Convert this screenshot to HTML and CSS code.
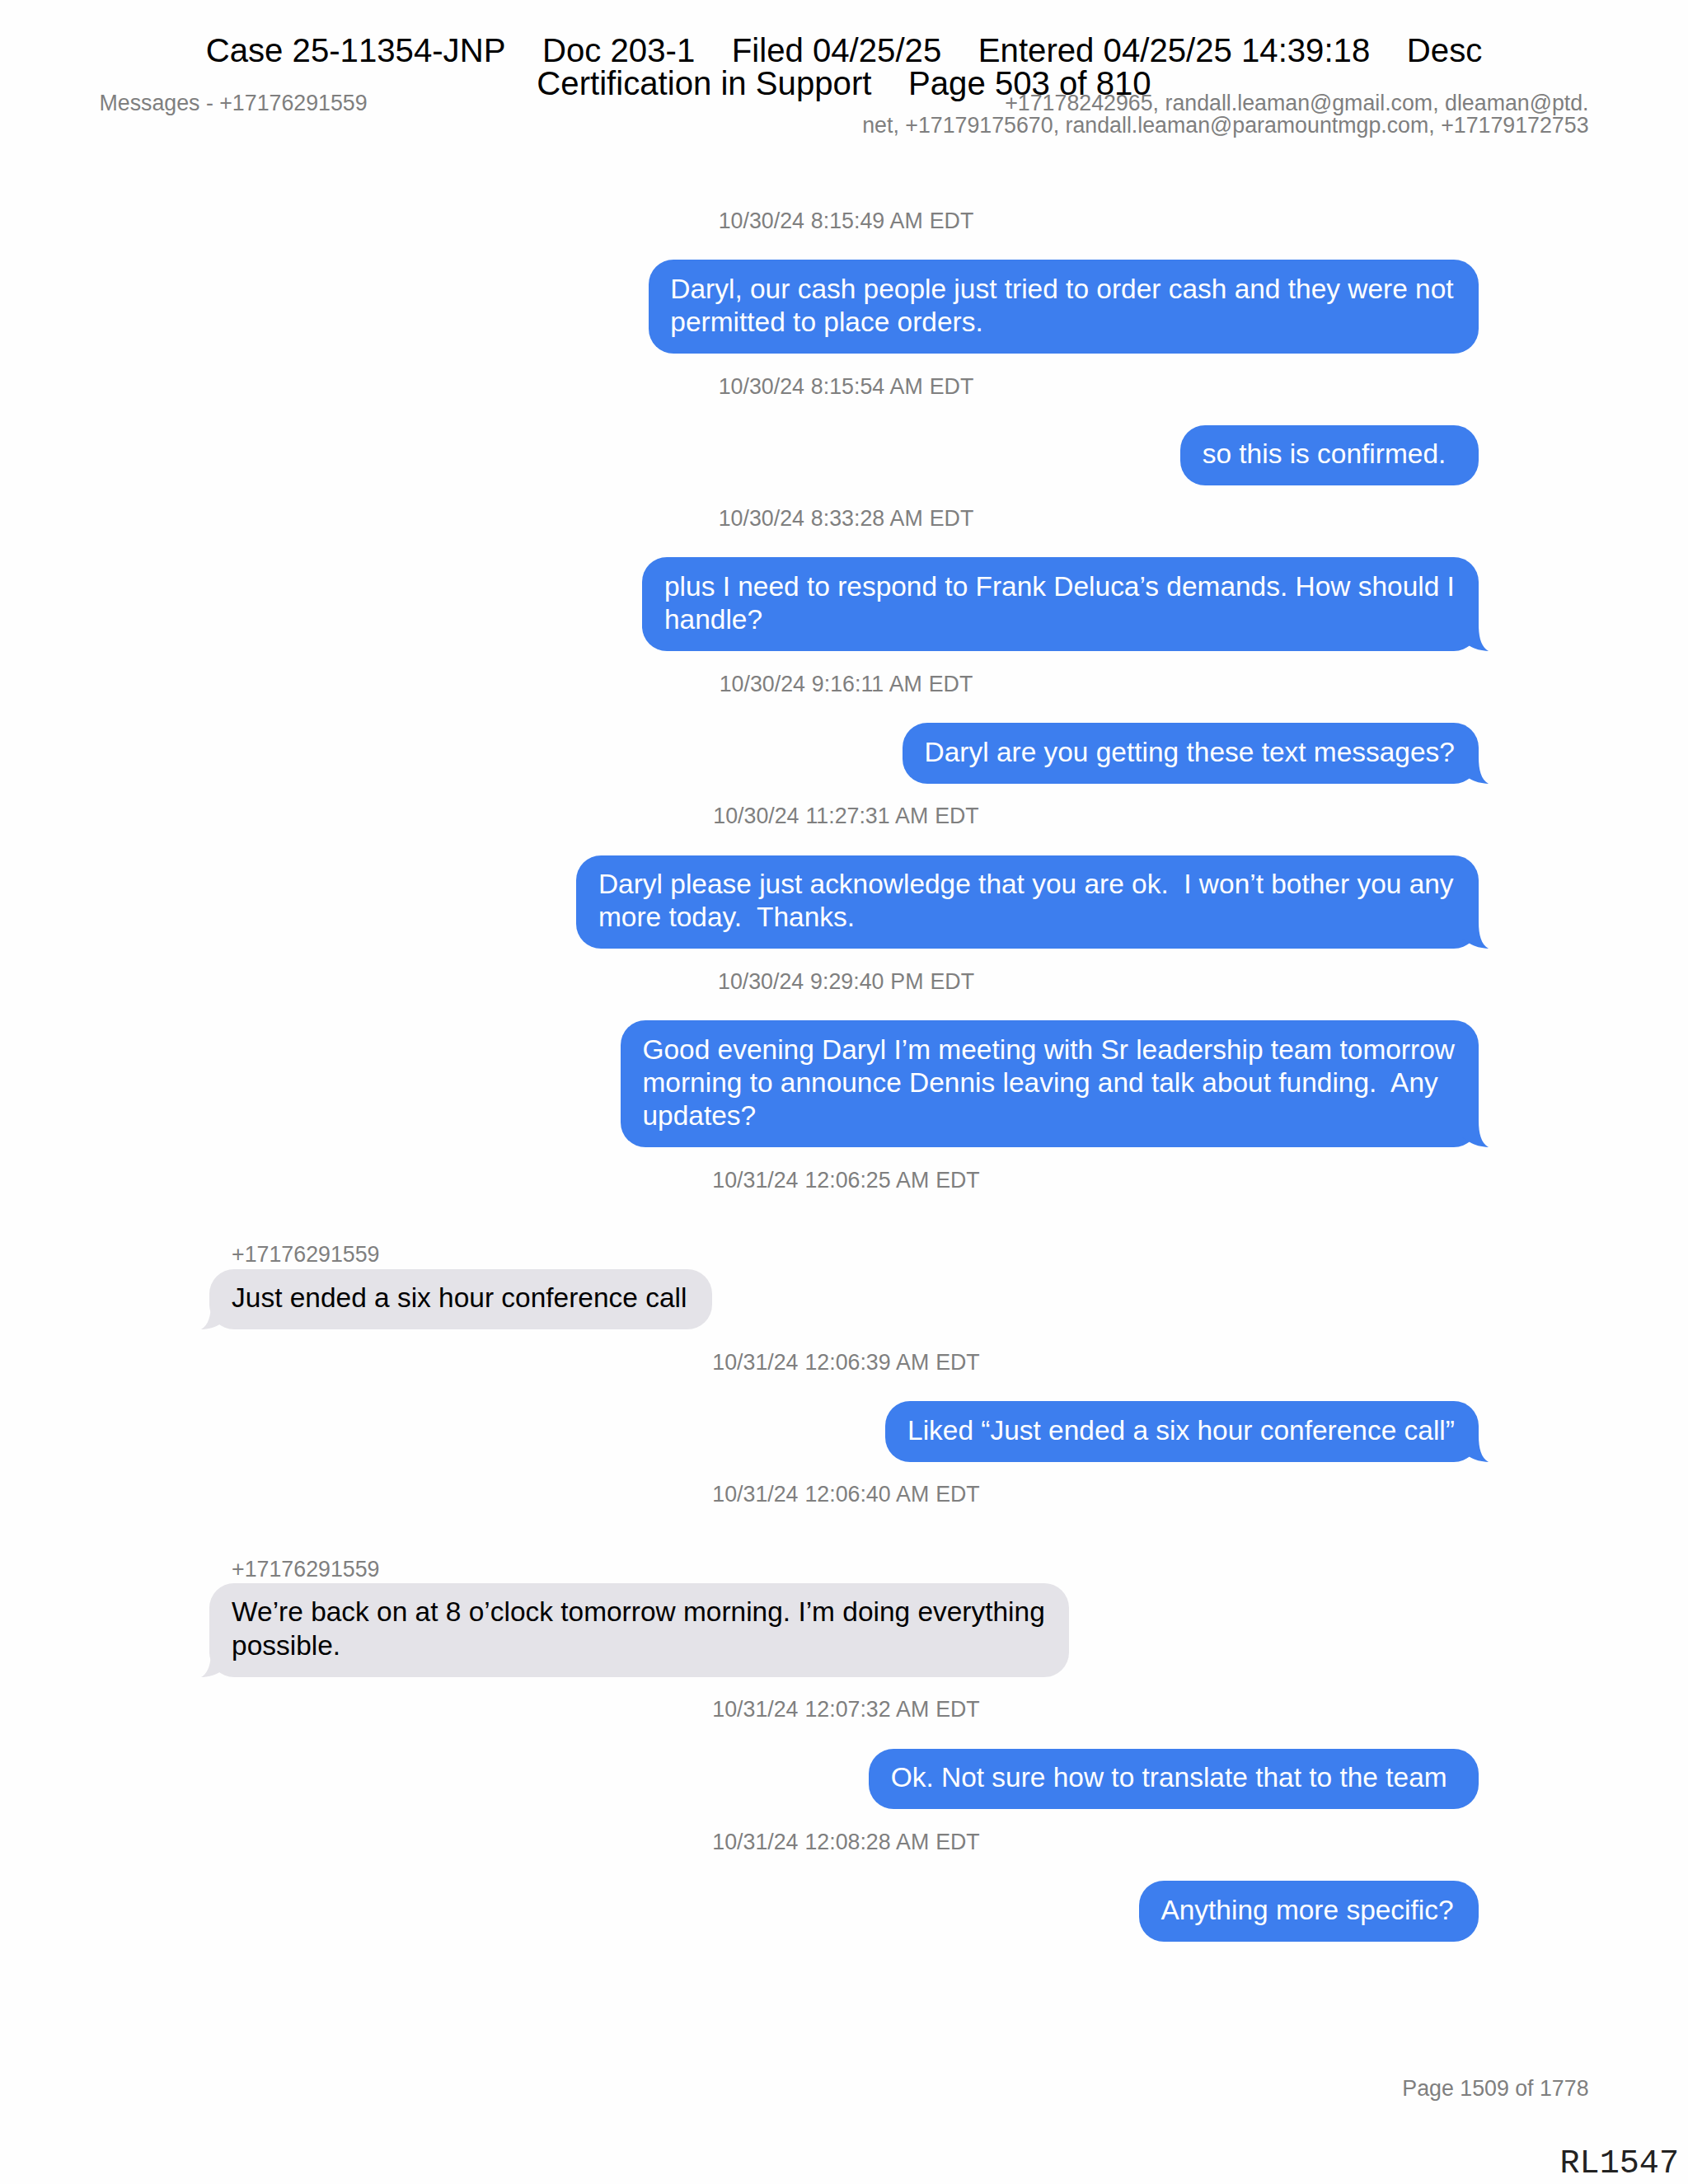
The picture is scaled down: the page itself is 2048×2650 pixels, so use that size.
FILE: index.html
```html
<!DOCTYPE html>
<html lang="en">
<head>
    <meta charset="UTF-8">
    <meta name="viewport" content="width=device-width, initial-scale=1.0">
    <title>Messages - +17176291559</title>
    <link rel="stylesheet" href="styles.css">
</head>
<body>
    <!-- Tail shape shared by all bubbles -->
    <svg class="defs" width="0" height="0">
        <symbol id="tail" viewBox="0 0 44 32">
            <path d="M30 0 C30 15 33 27 42 32 C33 31.6 25.500 30 18.600 25.600 L10 20 V0 Z"/>
        </symbol>
    </svg>

    <div class="page">
        <div class="court-stamp">
            <p>Case 25-11354-JNP    Doc 203-1    Filed 04/25/25    Entered 04/25/25 14:39:18    Desc</p>
            <p>Certification in Support    Page 503 of 810</p>
        </div>

        <header class="page-header">
            <p>Messages - +17176291559</p>
            <p class="recipients">+17178242965, randall.leaman@gmail.com, dleaman@ptd.<br>net, +17179175670, randall.leaman@paramountmgp.com, +17179172753</p>
        </header>

        <main class="thread">
            <p class="time">10/30/24 8:15:49 AM EDT</p>
            <div class="bubble sent">Daryl, our cash people just tried to order cash and they were not<br>permitted to place orders.</div>

            <p class="time">10/30/24 8:15:54 AM EDT</p>
            <div class="bubble sent">so this is confirmed. </div>

            <p class="time">10/30/24 8:33:28 AM EDT</p>
            <div class="bubble sent snug">plus I need to respond to Frank Deluca’s demands. How should I<br>handle?<svg class="tail"><use href="#tail"/></svg></div>

            <p class="time">10/30/24 9:16:11 AM EDT</p>
            <div class="bubble sent snug">Daryl are you getting these text messages?<svg class="tail"><use href="#tail"/></svg></div>

            <p class="time">10/30/24 11:27:31 AM EDT</p>
            <div class="bubble sent">Daryl please just acknowledge that you are ok.  I won’t bother you any<br>more today.  Thanks.<svg class="tail"><use href="#tail"/></svg></div>

            <p class="time">10/30/24 9:29:40 PM EDT</p>
            <div class="bubble sent snug">Good evening Daryl I’m meeting with Sr leadership team tomorrow<br>morning to announce Dennis leaving and talk about funding.  Any<br>updates?<svg class="tail"><use href="#tail"/></svg></div>

            <p class="time">10/31/24 12:06:25 AM EDT</p>
            <p class="sender">+17176291559</p>
            <div class="bubble received">Just ended a six hour conference call<svg class="tail"><use href="#tail"/></svg></div>

            <p class="time">10/31/24 12:06:39 AM EDT</p>
            <div class="bubble sent snug">Liked “Just ended a six hour conference call”<svg class="tail"><use href="#tail"/></svg></div>

            <p class="time">10/31/24 12:06:40 AM EDT</p>
            <p class="sender">+17176291559</p>
            <div class="bubble received snug">We’re back on at 8 o’clock tomorrow morning. I’m doing everything<br>possible.<svg class="tail"><use href="#tail"/></svg></div>

            <p class="time">10/31/24 12:07:32 AM EDT</p>
            <div class="bubble sent snug">Ok. Not sure how to translate that to the team </div>

            <p class="time">10/31/24 12:08:28 AM EDT</p>
            <div class="bubble sent">Anything more specific?</div>
        </main>

        <footer class="page-footer">
            <p class="page-number">Page 1509 of 1778</p>
            <p class="bates">RL1547</p>
        </footer>
    </div>
</body>
</html>
```

FILE: styles.css
```css
/* Letter page, 612pt wide, scaled up to 2048px */
:root {
    --pt: 3.3464px;
    --blue: #3d7eee;
    --gray: #e4e3e8;
    --muted: #7f7f7f;
}

body {
    margin: 0;
    background-color: #fefefe;
    font-family: "Liberation Sans", Arial, sans-serif;
}

p {
    margin: 0;
}

.defs {
    position: absolute;
}

.page {
    display: flex;
    flex-direction: column;
    box-sizing: border-box;
    width: 2048px;
    height: 2650px;
    padding-top: 42px;
    overflow: hidden;
}

/* Court filing stamp, runs slightly into the header below it */
.court-stamp {
    font-size: calc(var(--pt) * 12);
    line-height: calc(var(--pt) * 12);
    font-kerning: none;
    text-align: center;
    color: #000;
}

.court-stamp p {
    white-space: pre;
}

.page-header {
    display: flex;
    justify-content: space-between;
    margin-top: -10px;
    padding: 0 calc(var(--pt) * 36);
    font-size: calc(var(--pt) * 8);
    line-height: calc(var(--pt) * 8);
    color: var(--muted);
}

.recipients {
    text-align: right;
}

/* Messages */
.thread {
    display: flex;
    flex-direction: column;
    margin-top: 89px;
    padding: 0 calc(var(--pt) * 76);
}

.time {
    padding-left: 5px;
    text-align: center;
    margin: calc(var(--pt) * 8) 0 calc(var(--pt) * 10);
    font-size: calc(var(--pt) * 8);
    line-height: calc(var(--pt) * 8);
    word-spacing: 0.5px;
    color: var(--muted);
}

.time:first-child {
    margin-top: 0;
}

.sender {
    margin: calc(var(--pt) * 9) 0 calc(var(--pt) * 1);
    padding-left: calc(var(--pt) * 8);
    font-size: calc(var(--pt) * 8);
    line-height: calc(var(--pt) * 8);
    color: var(--muted);
}

.bubble {
    position: relative;
    padding: calc(var(--pt) * 4.65) calc(var(--pt) * 9) calc(var(--pt) * 5.35) calc(var(--pt) * 8);
    border-radius: calc(var(--pt) * 9);
    font-size: calc(var(--pt) * 10);
    line-height: calc(var(--pt) * 12);
    white-space: pre;
}

.snug {
    padding-right: calc(var(--pt) * 8.6);
}

.sent {
    align-self: flex-end;
    background-color: var(--blue);
    color: #fff;
}

.received {
    align-self: flex-start;
    background-color: var(--gray);
    color: #000;
}

.tail {
    position: absolute;
    bottom: 0;
    width: 44px;
    height: 32px;
}

.sent .tail {
    right: -14px;
    fill: var(--blue);
}

.received .tail {
    left: -12px;
    fill: var(--gray);
    transform: scaleX(-1);
}

/* Footer */
.page-footer {
    margin-top: auto;
    padding-bottom: 4px;
    text-align: right;
}

.page-number {
    padding-right: calc(var(--pt) * 36);
    font-size: calc(var(--pt) * 8);
    line-height: calc(var(--pt) * 8);
    color: var(--muted);
}

.bates {
    margin-top: 58px;
    padding-right: 11px;
    font-family: "Liberation Mono", "Courier New", monospace;
    font-size: calc(var(--pt) * 12);
    line-height: calc(var(--pt) * 12);
    color: #222;
}
```
